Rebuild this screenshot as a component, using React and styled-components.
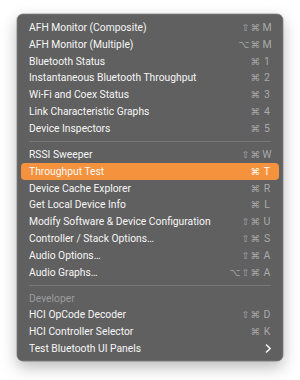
import React, { Fragment } from "react";
import styled, { createGlobalStyle } from "styled-components";

const Global = createGlobalStyle`
  html, body {
    margin: 0;
    background: #ffffff;
  }
  body {
    width: 300px;
    height: 380px;
    overflow: hidden;
    font-family: Roboto, "Liberation Sans", "DejaVu Sans", sans-serif;
  }
`;

const Page = styled.div`
  padding: 14px 0 0 17px;
`;

const Menu = styled.div`
  width: 266px;
  box-sizing: border-box;
  padding: 5px 4px 4px;
  background: #606060;
  border-radius: 6px;
  box-shadow: 0 0 0 0.5px rgba(0, 0, 0, 0.35), inset 0 0 0 0.5px rgba(255, 255, 255, 0.15),
    0 6px 16px rgba(0, 0, 0, 0.28);
`;

const Row = styled.div`
  display: flex;
  align-items: center;
  justify-content: space-between;
  height: 16.85px;
  padding: 0 6px 0 8px;
  border-radius: 4px;
  font-size: 10.3px;
  color: ${(p) => (p.$header ? "#9c9c9c" : "#f6f6f6")};
  background: ${(p) => (p.$active ? "#f5923e" : "transparent")};
  white-space: nowrap;
`;

const Label = styled.span`
  letter-spacing: 0;
`;

const Shortcut = styled.span`
  display: flex;
  align-items: center;
  color: ${(p) => (p.$active ? "#ffffff" : "#a9a9a9")};
  font-size: 10.5px;
`;

const Mods = styled.span`
  font-family: "DejaVu Sans", sans-serif;
  font-size: 9.5px;
  letter-spacing: 1px;
`;

const Key = styled.span`
  width: 12px;
  text-align: center;
  font-family: Roboto, "Liberation Sans", sans-serif;
`;

const Separator = styled.div`
  height: 1px;
  margin: 4px 8px;
  background: #777777;
`;

const Chevron = styled.svg`
  width: 7px;
  height: 9px;
  margin-right: 1px;
`;

const groups = [
  [
    ["AFH Monitor (Composite)", "⇧⌘", "M"],
    ["AFH Monitor (Multiple)", "⌥⌘", "M"],
    ["Bluetooth Status", "⌘", "1"],
    ["Instantaneous Bluetooth Throughput", "⌘", "2"],
    ["Wi-Fi and Coex Status", "⌘", "3"],
    ["Link Characteristic Graphs", "⌘", "4"],
    ["Device Inspectors", "⌘", "5"],
  ],
  [
    ["RSSI Sweeper", "⇧⌘", "W"],
    ["Throughput Test", "⌘", "T", true],
    ["Device Cache Explorer", "⌘", "R"],
    ["Get Local Device Info", "⌘", "L"],
    ["Modify Software & Device Configuration", "⇧⌘", "U"],
    ["Controller / Stack Options…", "⇧⌘", "S"],
    ["Audio Options…", "⇧⌘", "A"],
    ["Audio Graphs…", "⌥⇧⌘", "A"],
  ],
];

const developer = [
  ["HCI OpCode Decoder", "⇧⌘", "D"],
  ["HCI Controller Selector", "⌘", "K"],
];

const Item = ({ label, mods, k, active }) => (
  <Row $active={active}>
    <Label>{label}</Label>
    <Shortcut $active={active}>
      <Mods>{mods}</Mods>
      <Key>{k}</Key>
    </Shortcut>
  </Row>
);

export default function App() {
  return (
    <Page>
      <Global />
      <Menu>
        {groups.map((g, gi) => (
          <Fragment key={gi}>
            {g.map(([label, mods, k, active]) => (
              <Item key={label} label={label} mods={mods} k={k} active={active} />
            ))}
            <Separator />
          </Fragment>
        ))}
        <Row $header>
          <Label>Developer</Label>
        </Row>
        {developer.map(([label, mods, k]) => (
          <Item key={label} label={label} mods={mods} k={k} />
        ))}
        <Row>
          <Label>Test Bluetooth UI Panels</Label>
          <Chevron viewBox="0 0 7 9">
            <path d="M1.5 1 L5.2 4.5 L1.5 8" fill="none" stroke="#f6f6f6" strokeWidth="1.6" strokeLinecap="round" strokeLinejoin="round" />
          </Chevron>
        </Row>
      </Menu>
    </Page>
  );
}
